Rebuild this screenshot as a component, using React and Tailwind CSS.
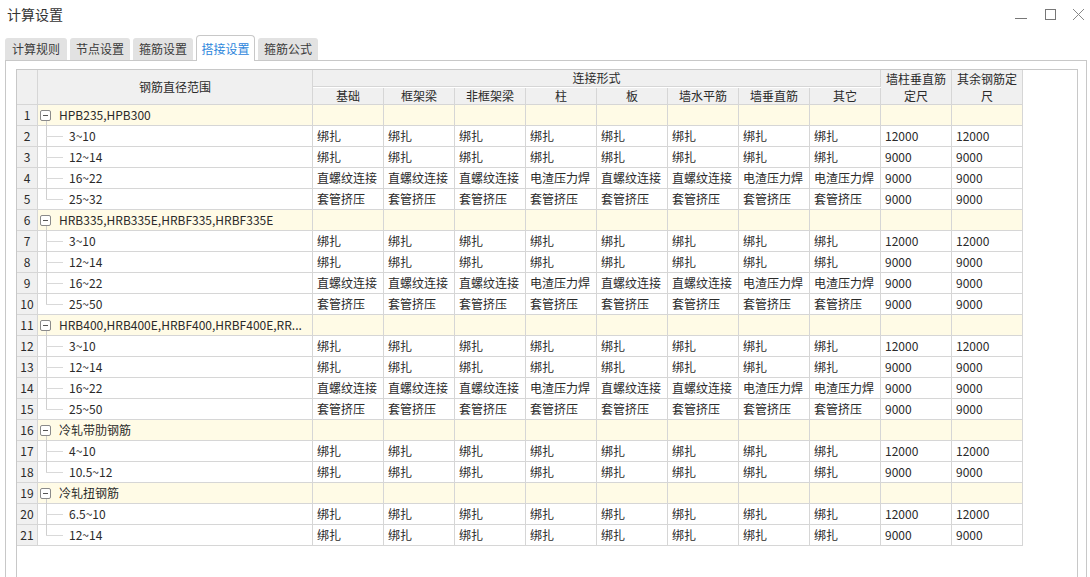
import React from "react";

const BZ = ["绑扎", "绑扎", "绑扎", "绑扎", "绑扎", "绑扎", "绑扎", "绑扎"];
const L12 = [...BZ, "12000", "12000"];
const L9 = [...BZ, "9000", "9000"];
const ZL = ["直螺纹连接", "直螺纹连接", "直螺纹连接", "电渣压力焊", "直螺纹连接", "直螺纹连接", "电渣压力焊", "电渣压力焊", "9000", "9000"];
const TG = ["套管挤压", "套管挤压", "套管挤压", "套管挤压", "套管挤压", "套管挤压", "套管挤压", "套管挤压", "9000", "9000"];

const groups = [
  { name: "HPB235,HPB300", items: [["3~10", L12], ["12~14", L9], ["16~22", ZL], ["25~32", TG]] },
  { name: "HRB335,HRB335E,HRBF335,HRBF335E", items: [["3~10", L12], ["12~14", L9], ["16~22", ZL], ["25~50", TG]] },
  { name: "HRB400,HRB400E,HRBF400,HRBF400E,RR...", items: [["3~10", L12], ["12~14", L9], ["16~22", ZL], ["25~50", TG]] },
  { name: "冷轧带肋钢筋", items: [["4~10", L12], ["10.5~12", L9]] },
  { name: "冷轧扭钢筋", items: [["6.5~10", L12], ["12~14", L9]] },
];

const subHeads = ["基础", "框架梁", "非框架梁", "柱", "板", "墙水平筋", "墙垂直筋", "其它"];
const tabs = ["计算规则", "节点设置", "箍筋设置", "搭接设置", "箍筋公式"];
const tabW = ["w-[62px]", "w-[60px]", "w-[60px]", "w-[59px]", "w-[60px]"];

const cell = "border-r border-b border-[#d6d6d6]";

const App = () => {
  const rows = [];
  let n = 0;
  groups.forEach((g, gi) => {
    n += 1;
    rows.push(
      <React.Fragment key={"g" + gi}>
        <div className={`${cell} h-[21px] bg-[#f0f0f0] flex items-center justify-center`}>{n}</div>
        <div className={`${cell} h-[21px] bg-[#fffbe6] relative flex items-center pl-[21px] pr-[2px] min-w-0`}>
          <span className="absolute left-[2px] top-[5px] w-[11px] h-[11px] border border-[#8a8a8a] rounded-[2px] bg-white flex items-center justify-center">
            <span className="block w-[5px] h-px bg-[#555]" />
          </span>
          <span className="absolute left-[8px] top-[16px] bottom-[-1px] w-px bg-[#cfcfcf]" />
          <span className="whitespace-nowrap">{g.name}</span>
        </div>
        {Array.from({ length: 10 }).map((_, i) => (
          <div key={i} className={`${cell} h-[21px] bg-[#fffbe6]`} />
        ))}
      </React.Fragment>
    );
    g.items.forEach(([label, vals], ii) => {
      n += 1;
      const last = ii === g.items.length - 1;
      rows.push(
        <React.Fragment key={"r" + gi + "-" + ii}>
          <div className={`${cell} h-[21px] bg-[#f0f0f0] flex items-center justify-center`}>{n}</div>
          <div className={`${cell} h-[21px] bg-white relative flex items-center pl-[31px]`}>
            <span className={`absolute left-[8px] top-0 w-px bg-[#cfcfcf] ${last ? "h-[10px]" : "h-[21px]"}`} />
            <span className="absolute left-[8px] top-[10px] w-[17px] h-px bg-[#d9d9d9]" />
            <span>{label}</span>
          </div>
          {vals.map((v, i) => (
            <div key={i} className={`${cell} h-[21px] bg-white flex items-center pl-[4px] whitespace-nowrap overflow-hidden`}>
              {v}
            </div>
          ))}
        </React.Fragment>
      );
    });
  });

  return (
    <div
      className="w-[1090px] h-[577px] overflow-hidden bg-white flex flex-col text-[12px] text-[#2a2a2a]"
      style={{ fontFamily: '"Noto Sans CJK SC", "Noto Sans", sans-serif' }}
    >
      {/* title bar */}
      <div className="h-[29px] flex items-center justify-between pl-[7px] pr-[5px]">
        <span className="text-[14px] text-[#333]">计算设置</span>
        <div className="flex items-center gap-[16px]">
          <svg width="13" height="12" viewBox="0 0 13 12">
            <line x1="0" y1="9.5" x2="12" y2="9.5" stroke="#777" strokeWidth="1" />
          </svg>
          <svg width="12" height="12" viewBox="0 0 12 12">
            <rect x="1.5" y="0.5" width="10" height="10" fill="none" stroke="#777" strokeWidth="1" />
          </svg>
          <svg width="13" height="13" viewBox="0 0 13 13">
            <path d="M1 1 L12 12 M12 1 L1 12" stroke="#888" strokeWidth="1" />
          </svg>
        </div>
      </div>

      {/* tabs */}
      <div className="flex items-end gap-[3px] pl-[5px] h-[31px]">
        {tabs.map((t, i) =>
          i === 3 ? (
            <div
              key={t}
              className={`${tabW[i]} h-[26px] -mb-px relative z-10 bg-white border border-b-0 border-[#c8c8c8] rounded-t-[4px] flex items-center justify-center text-[#2d86dc]`}
            >
              {t}
            </div>
          ) : (
            <div
              key={t}
              className={`${tabW[i]} h-[22px] bg-[#e2e2e2] rounded-t-[3px] flex items-center justify-center text-[#3a3a3a]`}
            >
              {t}
            </div>
          )
        )}
      </div>

      {/* panel */}
      <div className="flex-1 ml-[5px] mr-[3px] border border-b-0 border-[#c8c8c8] pl-[10px] pr-[8px] pt-[8px] flex flex-col min-h-0">
        <div className="flex-1 border border-b-0 border-[#c8c8c8]">
          <div className="grid grid-cols-[21px_275px_repeat(10,71px)] w-max">
            <div className={`${cell} row-span-2 bg-[#f0f0f0]`} />
            <div className={`${cell} row-span-2 bg-[#f0f0f0] flex items-center justify-center`}>钢筋直径范围</div>
            <div className={`${cell} col-span-8 h-[17px] bg-[#f0f0f0] flex items-center justify-center leading-[16px]`}>连接形式</div>
            <div className={`${cell} row-span-2 bg-[#f0f0f0] flex flex-col items-center justify-center leading-[17px]`}>
              <span>墙柱垂直筋</span>
              <span>定尺</span>
            </div>
            <div className={`${cell} row-span-2 bg-[#f0f0f0] flex flex-col items-center justify-center leading-[17px]`}>
              <span>其余钢筋定</span>
              <span>尺</span>
            </div>
            {subHeads.map((h) => (
              <div key={h} className={`${cell} h-[17px] bg-[#f0f0f0] flex items-center justify-center leading-[16px]`}>
                {h}
              </div>
            ))}
            {rows}
          </div>
        </div>
      </div>
    </div>
  );
};

export default App;
